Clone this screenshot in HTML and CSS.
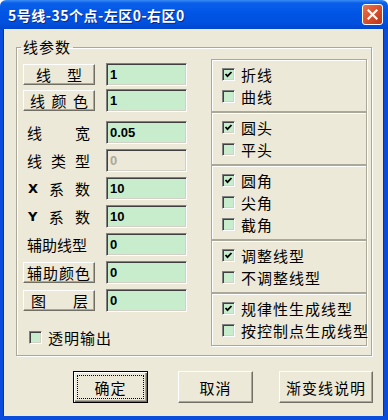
FILE: index.html
```html
<!DOCTYPE html>
<html lang="zh-CN">
  <head>
    <meta charset="UTF-8" />
    <meta name="viewport" content="width=device-width, initial-scale=1.0" />
    <title>线参数</title>
    <link rel="stylesheet" href="styles.css">
  </head>
  <body>
    <div class="window">
      <!-- title -->
      <div class="titlebar">
        <span class="title">5号线-35个点-左区0-右区0</span>
        <span class="close-btn">
          <svg width="11" height="11" viewBox="0 0 11 11">
            <path d="M1.5 1.5 L9.5 9.5 M9.5 1.5 L1.5 9.5" stroke="#fff" stroke-width="2.2" stroke-linecap="square" />
          </svg>
        </span>
      </div>

      <div class="client">
        <fieldset class="group">
          <legend>线参数</legend>
          <div class="group-body">
            <!-- left fields -->
            <div class="fields">
              <div class="field">
                <button class="cmd cmd-type"><span>线</span><span>型</span></button>
                <div class="edit">1</div>
              </div>
              <div class="field field-2">
                <button class="cmd cmd-color"><span>线</span><span>颜</span><span>色</span></button>
                <div class="edit">1</div>
              </div>
              <div class="field field-3">
                <div class="caption"><span>线</span><span>宽</span></div>
                <div class="edit">0.05</div>
              </div>
              <div class="field">
                <div class="caption"><span>线</span><span>类</span><span>型</span></div>
                <div class="edit disabled">0</div>
              </div>
              <div class="field">
                <div class="caption"><span class="latin">X</span><span>系</span><span>数</span></div>
                <div class="edit">10</div>
              </div>
              <div class="field">
                <div class="caption"><span class="latin">Y</span><span>系</span><span>数</span></div>
                <div class="edit">10</div>
              </div>
              <div class="field">
                <div class="caption"><span>辅助线型</span></div>
                <div class="edit">0</div>
              </div>
              <div class="field">
                <button class="cmd cmd-aux"><span>辅助颜色</span></button>
                <div class="edit">0</div>
              </div>
              <div class="field">
                <button class="cmd cmd-layer"><span>图</span><span>层</span></button>
                <div class="edit">0</div>
              </div>
              <div class="check check-alpha"><span class="box"></span>透明输出</div>
            </div>

            <!-- right options -->
            <div class="options">
              <div class="opt-group">
                <div class="check"><span class="box on"><svg width="9" height="9" viewBox="0 0 9 9"><path d="M1.5 4 L3.5 6.2 L7.5 2" stroke="#000" stroke-width="1.8" fill="none" /></svg></span>折线</div>
                <div class="check"><span class="box"></span>曲线</div>
              </div>
              <div class="opt-group">
                <div class="check"><span class="box on"><svg width="9" height="9" viewBox="0 0 9 9"><path d="M1.5 4 L3.5 6.2 L7.5 2" stroke="#000" stroke-width="1.8" fill="none" /></svg></span>圆头</div>
                <div class="check"><span class="box"></span>平头</div>
              </div>
              <div class="opt-group">
                <div class="check"><span class="box on"><svg width="9" height="9" viewBox="0 0 9 9"><path d="M1.5 4 L3.5 6.2 L7.5 2" stroke="#000" stroke-width="1.8" fill="none" /></svg></span>圆角</div>
                <div class="check"><span class="box"></span>尖角</div>
                <div class="check"><span class="box"></span>截角</div>
              </div>
              <div class="opt-group">
                <div class="check"><span class="box on"><svg width="9" height="9" viewBox="0 0 9 9"><path d="M1.5 4 L3.5 6.2 L7.5 2" stroke="#000" stroke-width="1.8" fill="none" /></svg></span>调整线型</div>
                <div class="check"><span class="box"></span>不调整线型</div>
              </div>
              <div class="opt-group">
                <div class="check"><span class="box on"><svg width="9" height="9" viewBox="0 0 9 9"><path d="M1.5 4 L3.5 6.2 L7.5 2" stroke="#000" stroke-width="1.8" fill="none" /></svg></span>规律性生成线型</div>
                <div class="check"><span class="box"></span>按控制点生成线型</div>
              </div>
            </div>
          </div>
        </fieldset>

        <!-- buttons -->
        <div class="actions">
          <button class="dlg-btn btn-ok">确定</button>
          <button class="dlg-btn">取消</button>
          <button class="dlg-btn btn-wide">渐变线说明</button>
        </div>
      </div>
    </div>
  </body>
</html>
```

FILE: styles.css
```css
/*global*/
* {
  margin: 0;
  padding: 0;
  box-sizing: border-box;
}

body {
  font-family: "Noto Sans CJK SC", "Noto Sans", sans-serif;
  font-size: 15px;
  color: #000;
  background: #fff;
}

/*window*/
.window {
  width: 388px;
  height: 420px;
  display: flex;
  flex-direction: column;
}

.titlebar {
  height: 29px;
  display: flex;
  align-items: center;
  padding: 0 5px 0 8px;
  background: linear-gradient(#3b8cf5 0, #0a5fe9 3px, #0055e5 45%, #0050dd 80%, #0046cf 100%);
  border-radius: 6px 6px 0 0;
}

.title {
  color: #fff;
  font-weight: bold;
  font-size: 14px;
  letter-spacing: 0.5px;
  text-shadow: 1px 1px 0 #0a2a8a;
}

.close-btn {
  margin-left: auto;
  width: 21px;
  height: 21px;
  border: 1px solid #fff;
  border-radius: 3px;
  background: linear-gradient(135deg, #e8744f 0, #d9502c 50%, #b8351a 100%);
  display: flex;
  align-items: center;
  justify-content: center;
}

.client {
  flex: 1;
  background: #ece9d8;
  border-left: 3px solid #0a4cdb;
  border-right: 4px solid #0a4cdb;
  border-bottom: 4px solid #0a4cdb;
  box-shadow: inset 1px 0 0 #0831b8, inset -1px 0 0 #0831b8;
}

/*group*/
.group {
  margin: 9px 12px 0 13px;
  padding: 3px 4px 8px 6px;
  border: 1px solid #aca899;
  box-shadow: inset 1px 1px 0 #fff, 1px 1px 0 #fff;
}

.group legend {
  margin-left: -2px;
  padding: 0 2px;
  line-height: 18px;
  letter-spacing: 1px;
}

.group-body {
  display: grid;
  grid-template-columns: 164px 156px;
  column-gap: 24px;
}

/*fields*/
.fields {
  display: flex;
  flex-direction: column;
  padding-top: 4px;
}

.field {
  height: 23px;
  display: flex;
  align-items: center;
  gap: 11px;
}

.field + .field {
  margin-top: 5px;
}

.field.field-2 {
  margin-top: 3px;
}

.field.field-3 {
  margin-top: 9px;
}

.caption,
.cmd {
  width: 72px;
  height: 21px;
  display: flex;
  align-items: center;
  justify-content: space-between;
  font-family: inherit;
  font-size: 15px;
  line-height: 1;
}

.caption {
  padding: 0 5px 0 4px;
}

.latin {
  font-family: "DejaVu Sans", sans-serif;
  font-weight: bold;
  font-size: 13px;
  padding-left: 1px;
}

.cmd {
  background: #ece9d8;
  border: 1px solid;
  border-color: #fff #716f64 #716f64 #fff;
  box-shadow: inset -1px -1px 0 #aca899;
  color: #000;
}

.cmd-type {
  padding: 0 12px;
}

.cmd-color {
  padding: 0 6px;
}

.cmd-aux {
  justify-content: center;
  padding: 0;
  letter-spacing: 1px;
}

.cmd-layer {
  padding: 0 6px 0 7px;
}

.edit {
  width: 81px;
  height: 23px;
  display: flex;
  align-items: center;
  padding-left: 3px;
  background: #c7edcc;
  border: 1px solid;
  border-color: #808080 #fff #fff #808080;
  box-shadow: inset 1px 1px 0 #404040, inset -1px -1px 0 #d4d0c8;
  font-family: "Liberation Sans", sans-serif;
  font-weight: bold;
  font-size: 13px;
}

.edit.disabled {
  background: #ece9d8;
  color: #aca899;
}

/*checks*/
.check {
  height: 22px;
  display: flex;
  align-items: center;
  gap: 6px;
  letter-spacing: 1px;
  white-space: nowrap;
}

.box {
  width: 13px;
  height: 13px;
  flex: none;
  display: flex;
  align-items: center;
  justify-content: center;
  background: #c7edcc;
  border: 1px solid;
  border-color: #808080 #fff #fff #808080;
  box-shadow: inset 1px 1px 0 #404040, inset -1px -1px 0 #d4d0c8;
}

.check-alpha {
  height: 20px;
  margin-top: 15px;
  padding-left: 6px;
}

.options {
  display: flex;
  flex-direction: column;
}

.opt-group {
  padding: 3px 0 4px 10px;
  border: 1px solid #aca899;
  box-shadow: inset 1px 1px 0 #fff, 1px 1px 0 #fff;
}

.opt-group + .opt-group {
  margin-top: 0;
}

.opt-group .check {
  gap: 6px;
}

/*actions*/
.actions {
  display: flex;
  gap: 26px;
  margin-top: 15px;
  padding-left: 70px;
}

.dlg-btn {
  width: 75px;
  height: 32px;
  font-family: inherit;
  font-size: 15px;
  letter-spacing: 1px;
  background: #ece9d8;
  color: #000;
  border: 1px solid;
  border-color: #fff #716f64 #716f64 #fff;
  box-shadow: inset -1px -1px 0 #aca899;
}

.btn-ok {
  position: relative;
  margin-right: 4px;
  border-color: #000;
  box-shadow: inset 1px 1px 0 #fff, inset -1px -1px 0 #716f64, inset -2px -2px 0 #aca899;
}

.btn-ok::after {
  content: "";
  position: absolute;
  inset: 3px;
  border: 1px dotted #000;
}

.btn-wide {
  width: 94px;
}
```
